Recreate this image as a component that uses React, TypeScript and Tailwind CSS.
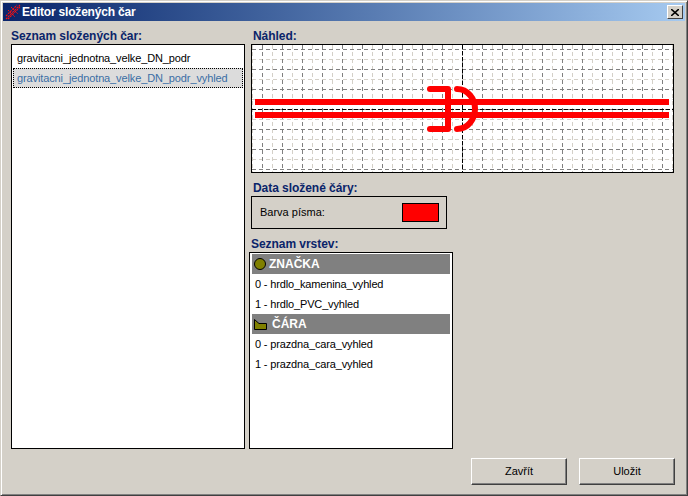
const font = "font-['Liberation_Sans',Arial,sans-serif]";

function Heading({ children, className = "" }: { children: string; className?: string }) {
  return <div className={`text-[12px] leading-[14px] font-bold tracking-[-0.05px] text-[#0a246a] ${className}`}>{children}</div>;
}

function AppIcon() {
  return (
    <svg width="16" height="16" viewBox="0 0 16 16" className="shrink-0">
      <path d="M1 15 15 1M3 15 15 3M1 12 12 1" stroke="#ff1010" strokeWidth="1.1" strokeDasharray="2 1" fill="none" />
      <path d="M3 6 10 13M6 3 13 10" stroke="#ff1010" strokeWidth="1" strokeDasharray="2 1" fill="none" />
    </svg>
  );
}

function Preview() {
  const W = 421;
  const H = 127;
  const cx = 210;
  const cy = 64;
  const darkV: string[] = [];
  const lightV: string[] = [];
  const darkH: string[] = [];
  const lightH: string[] = [];
  for (let x = 0; x <= W; x += 10) {
    (x % 20 === 0 ? lightV : darkV).push(`M${x + 0.5} 0V${H}`);
  }
  for (let y = 4; y <= H; y += 10) {
    ((y - 4) % 20 === 0 ? darkH : lightH).push(`M0 ${y + 0.5}H${W}`);
  }
  return (
    <svg width={W} height={H} viewBox={`0 0 ${W} ${H}`} className="block">
      <path d={lightH.join("") + lightV.join("")} stroke="#d4d0c8" strokeDasharray="4 3" fill="none" />
      <path d={darkH.join("") + darkV.join("")} stroke="#808080" strokeDasharray="4 3" fill="none" />
      <path d={`M0 ${cy + 0.5}H${W}M${cx + 0.5} 0V${H}`} stroke="#000" strokeDasharray="4 2" fill="none" />
      <g stroke="#ff0000" fill="none" strokeLinecap="round" strokeLinejoin="round">
        <path d="M3 57H417M3 70H417" strokeWidth="6" strokeLinecap="butt" />
        <path d="M178 44H196V84H178" strokeWidth="6" />
        <path d="M205 44C216 44 223 54 223 64C223 74 216 84 205 84" strokeWidth="6" />
      </g>
    </svg>
  );
}

function ListHeader({ label, icon, gap }: { label: string; icon: React.ReactNode; gap: string }) {
  return (
    <div className={`flex h-[20px] items-center bg-[#808080] pl-[2px] text-[12px] font-bold text-white ${gap}`}>
      {icon}
      <span>{label}</span>
    </div>
  );
}

function LayerRow({ children }: { children: string }) {
  return <div className="flex h-[20px] items-center pl-[3px] tracking-[-0.15px]">{children}</div>;
}

function Win95Button({ children }: { children: string }) {
  return (
    <button className="h-[27px] w-[96px] border border-t-white border-l-white border-r-[#404040] border-b-[#404040] bg-[#d4d0c8] text-center text-[11px] text-black shadow-[inset_-1px_-1px_0_#808080]">
      {children}
    </button>
  );
}

export default function App() {
  return (
    <div className={`${font} flex h-[496px] w-[688px] flex-col overflow-hidden border border-t-[#d4d0c8] border-l-[#d4d0c8] border-r-[#404040] border-b-[#404040] bg-[#d4d0c8] text-[11px] text-black shadow-[inset_1px_1px_0_#fff,inset_-1px_-1px_0_#808080]`}>
      <div className="mx-[2px] mt-[2px] flex h-[18px] items-center bg-gradient-to-r from-[#0a246a] to-[#a6caf0] px-[2px]">
        <AppIcon />
        <span className="ml-[1px] text-[12px] font-bold tracking-[-0.2px] text-white">Editor složených čar</span>
        <button className="ml-auto flex h-[14px] w-[16px] items-center justify-center border border-t-white border-l-white border-r-[#404040] border-b-[#404040] bg-[#d4d0c8]">
          <svg width="8" height="7" viewBox="0 0 8 7">
            <path d="M0 0 8 7M8 0 0 7" stroke="#000" strokeWidth="1.6" />
          </svg>
        </button>
      </div>

      <div className="flex flex-1 pl-[10px] pr-[13px] pt-[8px]">
        <div className="flex w-[234px] flex-col">
          <Heading className="mb-[1px]">Seznam složených čar:</Heading>
          <div className="h-[405px] border border-black bg-white p-px pt-[3px] tracking-[-0.12px]">
            <div className="flex h-[20px] items-center pl-[4px]">gravitacni_jednotna_velke_DN_podr</div>
            <div className="flex h-[20px] items-center border border-dotted border-black bg-[#dcdcdc] pl-[3px] text-[#3a6ea5]">gravitacni_jednotna_velke_DN_podr_vyhled</div>
          </div>
        </div>

        <div className="ml-[6px] flex flex-1 flex-col">
          <Heading className="mb-[1px] ml-[2px]">Náhled:</Heading>
          <div className="h-[129px] w-[423px] overflow-hidden border border-black bg-white">
            <Preview />
          </div>
          <Heading className="mt-[8px] ml-[2px]">Data složené čáry:</Heading>
          <div className="mt-[1px] flex h-[33px] w-[196px] items-center justify-between border border-black pl-[8px] pr-[7px]">
            <span>Barva písma:</span>
            <span className="h-[19px] w-[37px] border border-black bg-[#ff0000]" />
          </div>
          <Heading className="mt-[8px]">Seznam vrstev:</Heading>
          <div className="-ml-[2px] mt-[1px] h-[197px] w-[204px] border border-black bg-white p-[2px] pt-[1px]">
            <ListHeader
              label="ZNAČKA"
              gap="gap-[3px]"
              icon={
                <svg width="12" height="12" viewBox="0 0 12 12">
                  <circle cx="6" cy="6" r="5.5" fill="#808000" stroke="#000" />
                </svg>
              }
            />
            <LayerRow>0 - hrdlo_kamenina_vyhled</LayerRow>
            <LayerRow>1 - hrdlo_PVC_vyhled</LayerRow>
            <ListHeader
              label="ČÁRA"
              gap="gap-[5px]"
              icon={
                <svg width="13" height="11" viewBox="0 0 13 11">
                  <path d="M.5.5V10.5H12.5V4.5H5Z" fill="#808000" stroke="#000" />
                </svg>
              }
            />
            <LayerRow>0 - prazdna_cara_vyhled</LayerRow>
            <LayerRow>1 - prazdna_cara_vyhled</LayerRow>
          </div>
        </div>
      </div>

      <div className="flex justify-end gap-[12px] pr-[12px] pb-[10px]">
        <Win95Button>Zavřít</Win95Button>
        <Win95Button>Uložit</Win95Button>
      </div>
    </div>
  );
}
